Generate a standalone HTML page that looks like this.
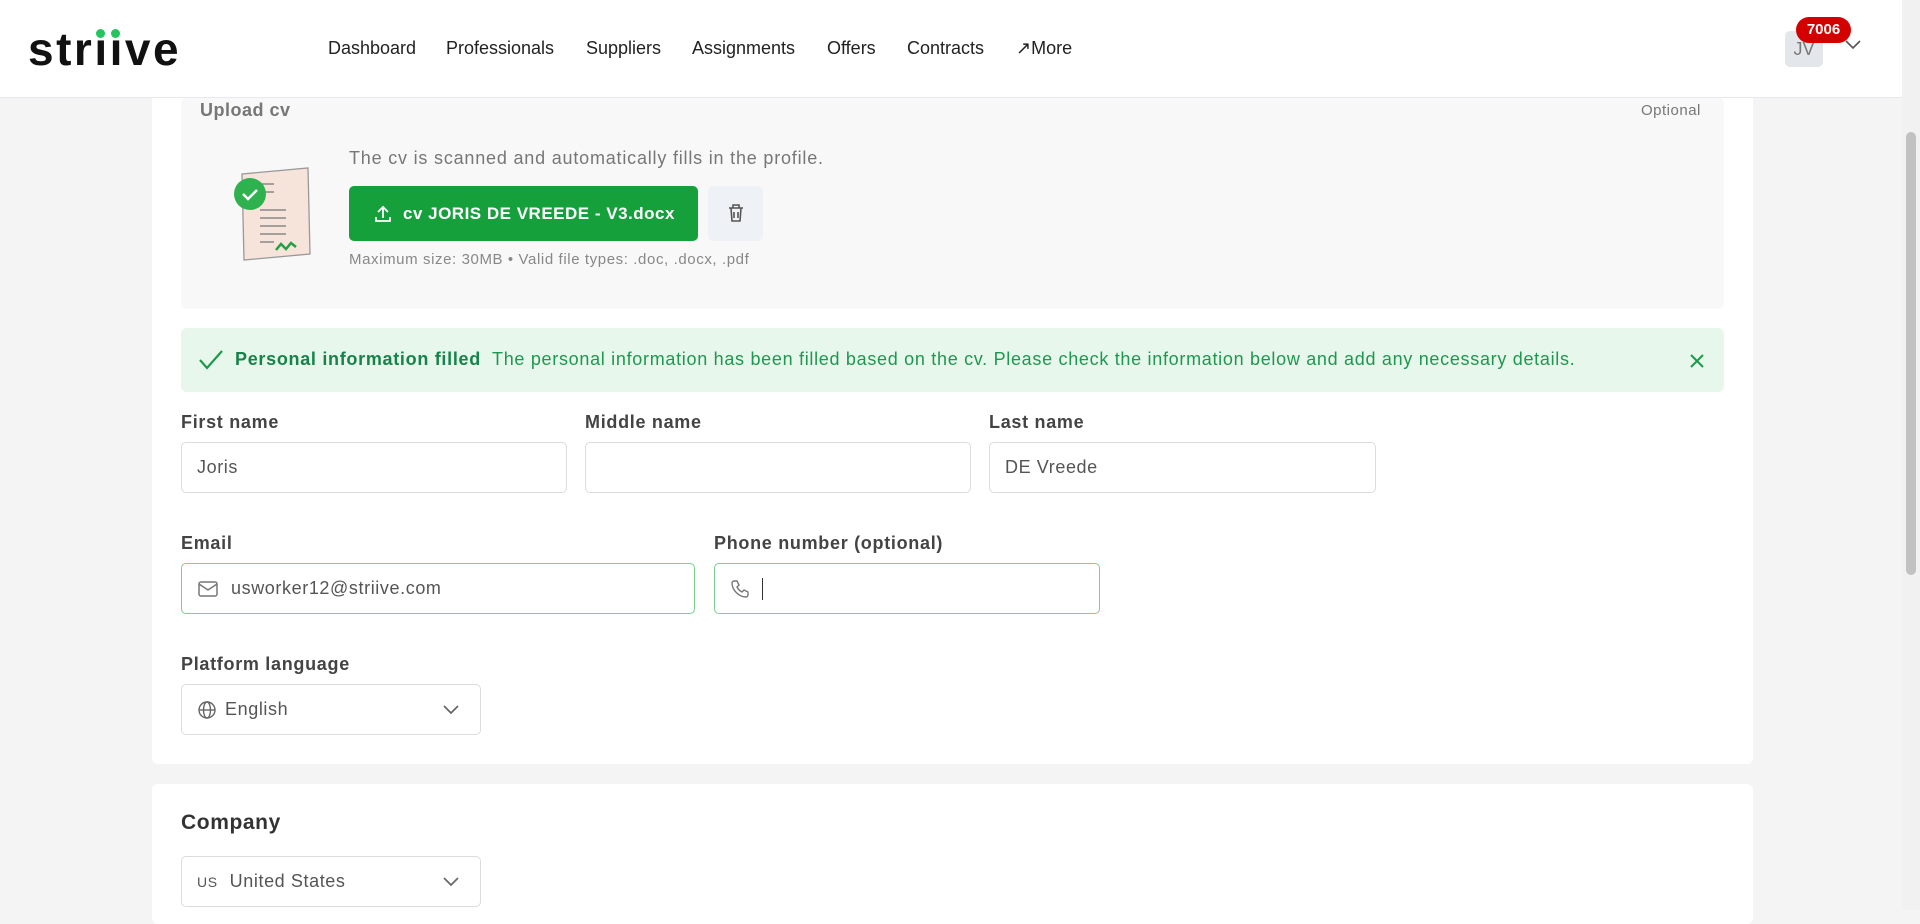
<!DOCTYPE html>
<html><head><meta charset="utf-8"><style>
*{box-sizing:border-box;margin:0;padding:0}
body{width:1920px;height:910px;overflow:hidden;background:#f4f4f4;font-family:"Liberation Sans",sans-serif;color:#333;position:relative}
.a{position:absolute}
.hdr{left:0;top:0;width:1902px;height:98px;background:#fff;border-bottom:1px solid #e6e9ee;z-index:5}
.nav span{position:absolute;top:38px;font-size:18px;color:#222}
.card{background:#fff;border-radius:6px;left:152px;width:1601px}
.lbl{font-size:18px;font-weight:bold;color:#444;letter-spacing:.7px}
.inp{height:51px;border:1px solid #dcdcdc;border-radius:5px;background:#fff;font-size:18px;letter-spacing:.6px;color:#555;padding-left:15px;display:flex;align-items:center}
.g{border:1.5px solid #7ccf8f}
.di{position:relative;display:inline-block}
.di:after{content:"";position:absolute;left:50%;margin-left:-6px;top:7px;width:9px;height:9px;border-radius:50%;background:#22c55e}
</style></head><body>
<div class="a hdr">
  <div class="a" style="left:28px;top:22px;font-size:46px;font-weight:bold;color:#111;letter-spacing:2.5px;white-space:nowrap">str<span class="di">ı</span><span class="di">ı</span>ve</div>
  <div class="nav">
    <span style="left:328px">Dashboard</span><span style="left:446px">Professionals</span><span style="left:586px">Suppliers</span><span style="left:692px">Assignments</span><span style="left:827px">Offers</span><span style="left:907px">Contracts</span><span style="left:1016px">↗More</span>
  </div>
  <div class="a" style="left:1785px;top:31px;width:38px;height:36px;background:#e3e6ea;border-radius:5px;color:#777;font-size:18px;text-align:center;line-height:36px">JV</div>
  <div class="a" style="left:1796px;top:17px;width:55px;height:26px;background:#d40000;border-radius:13px;color:#fff;font-size:15px;font-weight:bold;text-align:center;line-height:26px">7006</div>
  <svg class="a" style="left:1844px;top:38px" width="18" height="14" viewBox="0 0 18 14"><path d="M2 3l7 7 7-7" fill="none" stroke="#555" stroke-width="1.6"/></svg>
</div>
<div class="a" style="left:1902px;top:0;width:18px;height:910px;background:#f1f1f1"></div>
<div class="a" style="left:1906px;top:132px;width:10px;height:443px;background:#c1c1c1;border-radius:5px"></div>

<div class="a card" style="top:60px;height:704px"></div>
<div class="a" style="left:181px;top:98px;width:1543px;height:211px;background:#f8f8f8;border-radius:6px"></div>
<div class="a" style="left:200px;top:100px;font-size:18px;letter-spacing:.5px;font-weight:bold;color:#777">Upload cv</div>
<div class="a" style="left:1641px;top:102px;font-size:15px;letter-spacing:.5px;color:#777">Optional</div>
<svg class="a" style="left:230px;top:166px" width="84" height="98" viewBox="0 0 84 98">
<path d="M12 8 L78 2 L80 88 L14 94 Z" fill="#f6e3da" stroke="#999" stroke-width="1.3"/>
<g stroke="#888" stroke-width="1.6" fill="none"><path d="M30 18h14M30 26h14M30 44h26M30 52h26M30 60h26M30 68h26M30 76h14"/></g>
<path d="M46 84 l5-6 5 5 5-6 5 4" stroke="#22a045" stroke-width="2.5" fill="none"/>
<circle cx="20" cy="28" r="16" fill="#2fb14f"/><path d="M13 28l5 5 9-9" stroke="#fff" stroke-width="2.5" fill="none"/>
</svg>
<div class="a" style="left:349px;top:148px;font-size:18px;letter-spacing:.8px;color:#777">The cv is scanned and automatically fills in the profile.</div>
<div class="a" style="left:349px;top:186px;width:349px;height:55px;background:#16a03c;border-radius:5px;color:#fff;font-weight:bold;font-size:17px;letter-spacing:.5px;display:flex;align-items:center;padding-left:24px">
<svg width="20" height="20" viewBox="0 0 20 20" style="margin-right:10px"><path d="M10 14V3M5 8l5-5 5 5M3 13v4h14v-4" fill="none" stroke="#fff" stroke-width="1.8"/></svg>cv JORIS DE VREEDE - V3.docx</div>
<div class="a" style="left:708px;top:186px;width:55px;height:55px;background:#eef1f5;border-radius:5px"></div>
<svg class="a" style="left:725px;top:202px" width="22" height="22" viewBox="0 0 22 22"><path d="M4 6h14M8 6V3h6v3M6 6l1 13h8l1-13M9 10v6M13 10v6" fill="none" stroke="#555" stroke-width="1.6"/></svg>
<div class="a" style="left:349px;top:251px;font-size:15px;letter-spacing:.6px;color:#888">Maximum size: 30MB • Valid file types: .doc, .docx, .pdf</div>

<div class="a" style="left:181px;top:328px;width:1543px;height:64px;background:#e7f7ec;border-radius:6px"></div>
<svg class="a" style="left:198px;top:348px" width="26" height="24" viewBox="0 0 26 24"><path d="M2 12l7 8L24 3" fill="none" stroke="#1a9a4a" stroke-width="2.2"/></svg>
<div class="a" style="left:235px;top:349px;font-size:18px;letter-spacing:.7px;color:#1f9750;white-space:nowrap"><b style="color:#17834a">Personal information filled</b>&nbsp; The personal information has been filled based on the cv. Please check the information below and add any necessary details.</div>
<svg class="a" style="left:1688px;top:352px" width="18" height="18" viewBox="0 0 18 18"><path d="M3 3l12 12M15 3L3 15" stroke="#1a9a4a" stroke-width="2"/></svg>

<div class="a lbl" style="left:181px;top:412px">First name</div>
<div class="a lbl" style="left:585px;top:412px">Middle name</div>
<div class="a lbl" style="left:989px;top:412px">Last name</div>
<div class="a inp" style="left:181px;top:442px;width:386px">Joris</div>
<div class="a inp" style="left:585px;top:442px;width:386px"></div>
<div class="a inp" style="left:989px;top:442px;width:387px">DE Vreede</div>

<div class="a lbl" style="left:181px;top:533px">Email</div>
<div class="a lbl" style="left:714px;top:533px">Phone number (optional)</div>
<div class="a inp g" style="left:181px;top:563px;width:514px"><svg width="22" height="18" viewBox="0 0 22 18" style="margin-right:12px"><rect x="2" y="2" width="18" height="14" rx="2" fill="none" stroke="#777" stroke-width="1.5"/><path d="M2 4l9 6 9-6" fill="none" stroke="#777" stroke-width="1.5"/></svg>usworker12@striive.com</div>
<div class="a inp g" style="left:714px;top:563px;width:386px"><svg width="20" height="20" viewBox="0 0 20 20" style="margin-right:12px"><path d="M4 2l3 0 2 4-2 2c1 2 3 4 5 5l2-2 4 2v3c0 1-1 2-2 2C9 18 2 11 2 4c0-1 1-2 2-2z" fill="none" stroke="#777" stroke-width="1.4"/></svg><span style="width:1px;height:22px;background:#333"></span></div>

<div class="a lbl" style="left:181px;top:654px">Platform language</div>
<div class="a inp" style="left:181px;top:684px;width:300px"><svg width="20" height="20" viewBox="0 0 20 20" style="margin-right:8px"><circle cx="10" cy="10" r="8" fill="none" stroke="#666" stroke-width="1.4"/><ellipse cx="10" cy="10" rx="3.5" ry="8" fill="none" stroke="#666" stroke-width="1.4"/><path d="M2 10h16" stroke="#666" stroke-width="1.4"/></svg>English
<svg width="18" height="12" viewBox="0 0 18 12" style="position:absolute;right:20px"><path d="M2 2l7 7 7-7" fill="none" stroke="#666" stroke-width="1.7"/></svg></div>

<div class="a card" style="top:784px;height:140px"></div>
<div class="a" style="left:181px;top:811px;font-size:21px;letter-spacing:.6px;font-weight:bold;color:#333">Company</div>
<div class="a inp" style="left:181px;top:856px;width:300px"><span style="font-size:14px;margin-right:12px">US</span>United States
<svg width="18" height="12" viewBox="0 0 18 12" style="position:absolute;right:20px"><path d="M2 2l7 7 7-7" fill="none" stroke="#666" stroke-width="1.7"/></svg></div>
</body></html>
